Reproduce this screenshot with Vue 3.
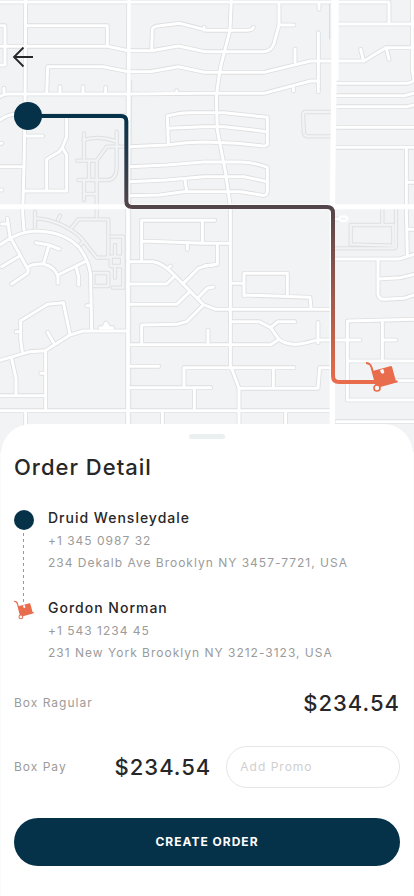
<script setup>
import { ref } from 'vue'

const promo = ref('')

const stops = [
  { kind: 'origin', name: 'Druid Wensleydale', phone: '+1 345 0987 32', address: '234 Dekalb Ave Brooklyn NY 3457-7721, USA' },
  { kind: 'target', name: 'Gordon Norman', phone: '+1 543 1234 45', address: '231 New York Brooklyn NY 3212-3123, USA' },
]
</script>

<template>
  <main class="page">
    <section class="map" aria-label="Delivery route">
      <svg class="map-canvas" viewBox="0 0 1242 1356" preserveAspectRatio="xMidYMin slice" aria-hidden="true">
        <defs>
          <linearGradient id="route-fade" gradientUnits="userSpaceOnUse" x1="0" y1="348" x2="0" y2="1146">
            <stop offset="0" stop-color="#053149" />
            <stop offset="1" stop-color="#e96c4c" />
          </linearGradient>
          <g id="lanes" fill="none" stroke-linecap="round" stroke-linejoin="round">
            <path d="M252 400V475M250 420Q300 405 350 425M350 395V500Q350 540 320 540H235M232 482H290L320 440H380M267 485V540M290 485V650M252 540V600M252 582H290" />
            <path d="M992 336H917Q909 336 909 346L912 400Q914 409 924 409H992" />
            <g transform="translate(0 615)">
              <path d="M105 20V70M110 40Q180 45 240 95L290 158H325V43H235L215 68M180 32L174 45M235 125L250 110M334 95H370V248H338M338 155H366V183H332V155ZM345 120V155M345 183V218M280 204H325V243H280Z" />
            </g>
            <g transform="translate(612 615)">
              <path d="M395 130H568Q576 130 576 120V12M440 60H568V122L440 118ZM535 12V60" />
            </g>
          </g>
          <g id="streets" fill="none" stroke-linecap="round" stroke-linejoin="round">
            <path d="M0 6H1167V72M77 0L75 340L72 500L68 640L72 690M80 77H322V137M0 139H322L385 152H455L535 138L615 155H792Q815 153 822 130L837 75V8M455 150L457 88Q460 78 480 77L540 70L622 91H742Q760 90 760 82" />
            <path d="M0 77H15V195H0M140 280L143 200H310L385 215H450L535 200L612 217H792L932 183H1092L1157 143H1242M0 290Q10 282 25 282H385L612 280H792L932 243H955M180 260V280M249 260V280M317 262V280M12 265V280M530 272V280" />
            <path d="M200 350V410L187 443L200 465V573H75M187 443L178 455L140 478V573M80 408H128M0 500H72M0 360Q20 345 45 343M75 347H380M0 570H6M0 430H6" />
            <path d="M505 430L502 348Q540 338 570 338H672L802 352V433Q797 440 782 437L712 430L612 426L560 428L500 435L390 440M505 385L612 380H672L802 395M390 500L500 495L612 486H722Q762 487 802 502V575Q800 590 782 585L722 575H622L550 575L480 585L390 587M390 545L500 540L612 530H732L802 545M555 540L560 573" />
            <g transform="translate(612 0)">
              <path d="M82 0L78 90L50 200Q38 270 37 300L40 390L65 520L79 620V1095L105 1165V1290M343 98V275M273 147V187M345 10V28M225 75H270M268 265V272M0 82V91" />
              <path d="M400 72H630M625 0V210L630 240M400 250H608Q625 248 630 240M400 287H600L630 280M400 320H610L630 315M400 382H630M395 442H630M607 445V610M610 547H630M470 148L478 180M547 145L555 178" />
            </g>
            <g transform="translate(0 615)">
              <path d="M0 120Q50 80 110 78Q190 80 235 125Q275 175 272 230L275 375M22 40L30 95L85 195L82 205L35 237M5 57H22M5 185L55 155M85 185Q100 175 130 177Q165 185 174 215V235M130 177L147 122M108 113L147 120L178 132M174 210L255 170M228 185L236 215V240" />
              <path d="M0 466L90 440L135 437L210 390L250 378H383M210 388L190 293L143 298L62 347V405L67 440M160 412L143 382M48 380H60M35 460L48 520V570M0 572H137M137 437V612M122 505H134M260 302H272M300 368H338M312 366L318 354L326 366M77 620V670M487 620V660M0 617H995" />
              <path d="M425 165V46H644M607 50V110M427 108L612 115H687M562 118V133M385 170H460Q490 175 525 212L610 299L647 313H995M390 237H500L525 212M506 188L512 183M390 298H530L567 262M550 235L595 190L620 182L642 180M597 275L622 250L640 246M610 300L560 350L530 358L425 360V415" />
              <path d="M390 419H812L837 403L812 368L777 350H697M812 368L834 350H884M837 403Q867 425 912 415L952 405H1080M954 352V413M624 375V417M390 484H476M390 548H632M552 545V488H882M820 488V548M718 550H954L959 488H992M583 550V612" />
            </g>
            <g transform="translate(612 615)">
              <path d="M40 118V178L0 183M80 235H120M120 272V205H250V272M120 270L318 277L321 310M245 620V660" />
              <path d="M395 162H585L630 148M607 12L610 150M612 73H630M522 165V268Q525 283 540 283L600 280L630 270M522 222L590 218L630 208M430 585V348L630 343M535 350V465M540 405H576M432 468H630M430 585H630M560 527H630M398 650H630M395 42H412" />
            </g>
          </g>
          <g id="avenues" fill="none">
            <path stroke-width="10" d="M387 0L384 640V1290" />
            <path stroke-width="15" d="M0 620H1242" />
            <path stroke-width="22" d="M1005 0V240" />
            <path stroke-width="16" d="M1002 230L997 620V1300" />
          </g>
          <symbol id="cart" viewBox="0 0 96 92">
            <path d="M2 4L10 7Q15 10 17 18L31 70" fill="none" stroke="#e96c4c" stroke-width="6" stroke-linecap="round" />
            <path d="M20 28L75 13Q77 13 78 15L89 56L95 57L95 62L43 76L39 72L31 74Z" fill="#e96c4c" />
            <path d="M42 25L52 22L55 33L50 36L45 34Z" fill="#f7f8f9" />
            <circle cx="33" cy="79" r="9" fill="#f7f8f9" stroke="#e96c4c" stroke-width="5" />
          </symbol>
        </defs>

        <use href="#lanes" stroke="#dedfe1" stroke-width="13" />
        <use href="#lanes" stroke="#f1f3f5" stroke-width="7" />
        <use href="#streets" stroke="#dcdee0" stroke-width="14" />
        <path d="M380 0L377 640V1290M395 240L392 640V1290" fill="none" stroke="#e0e2e4" stroke-width="3" />
        <use href="#streets" stroke="#ffffff" stroke-width="9" />
        <use href="#avenues" stroke="#ffffff" />
        <path d="M989 12V118" stroke="#cfdcec" stroke-width="3" />
        <ellipse cx="1030" cy="656" rx="12" ry="7" fill="#f1f3f5" stroke="#ffffff" stroke-width="7" />

        <path
          d="M84 348H363Q379 348 379 364V603Q379 621 397 621H981Q999 621 999 639V1128Q999 1146 1017 1146H1130"
          fill="none"
          stroke="url(#route-fade)"
          stroke-width="12"
        />
        <circle cx="84" cy="348" r="42" fill="#053149" />
        <use href="#cart" x="1098" y="1085" width="96" height="92" />
      </svg>

      <button class="back" type="button" aria-label="Back">
        <svg viewBox="0 0 24 24" aria-hidden="true">
          <path d="M22 12H3M12.500 2.500L3 12L12.500 21.500" fill="none" stroke="#272727" stroke-width="1.800" />
        </svg>
      </button>
    </section>

    <section class="sheet">
      <div class="handle"></div>
      <h1 class="title">Order Detail</h1>

      <ol class="stops">
        <li v-for="stop in stops" :key="stop.name" class="stop">
          <div class="marker">
            <span v-if="stop.kind === 'origin'" class="dot"></span>
            <span v-if="stop.kind === 'origin'" class="trail"></span>
            <svg v-else class="cart" viewBox="0 0 96 92" aria-hidden="true"><use href="#cart" /></svg>
          </div>
          <div class="info">
            <h2 class="name">{{ stop.name }}</h2>
            <p class="detail">{{ stop.phone }}</p>
            <p class="detail">{{ stop.address }}</p>
          </div>
        </li>
      </ol>

      <div class="row">
        <span class="detail">Box Ragular</span>
        <span class="price">$234.54</span>
      </div>

      <form class="checkout" @submit.prevent>
        <div class="pay">
          <label class="detail" for="promo">Box Pay</label>
          <span class="price">$234.54</span>
          <input id="promo" v-model="promo" class="promo" type="text" placeholder="Add Promo" aria-label="Add Promo" />
        </div>
        <button class="submit" type="submit">CREATE ORDER</button>
      </form>
    </section>
  </main>
</template>

<style>
body {
  margin: 0;
  background: #fafbfb;
}
</style>

<style scoped>
.page {
  display: flex;
  flex-direction: column;
  min-height: 100vh;
  color: #272727;
  font-family: Inter, "Liberation Sans", sans-serif;
  letter-spacing: 1px;
}

.map {
  position: relative;
  height: 452px;
  overflow: hidden;
  background: #f1f3f5;
}

.map-canvas {
  display: block;
  width: 100%;
  height: 100%;
}

.back {
  position: absolute;
  top: 45px;
  left: 11px;
  width: 24px;
  height: 24px;
  padding: 0;
  border: 0;
  background: none;
  cursor: pointer;
}

.back svg {
  display: block;
}

.sheet {
  position: relative;
  flex: 1;
  box-sizing: border-box;
  margin: -28px 1px 0;
  padding: 10px 13px 30px;
  border-radius: 30px 30px 0 0;
  background: #fff;
}

.handle {
  width: 36px;
  height: 5px;
  margin: 0 auto 12px;
  border-radius: 3px;
  background: #eaf0f0;
}

.title {
  margin: 0 0 24px;
  font-size: 22px;
  font-weight: 500;
  line-height: 32px;
}

.stops {
  display: flex;
  flex-direction: column;
  margin: 0;
  padding: 0;
  list-style: none;
}

.stop {
  display: flex;
  gap: 14px;
}

.stop:not(:last-child) .info {
  padding-bottom: 23px;
}

.marker {
  display: flex;
  flex-direction: column;
  gap: 3px;
  width: 20px;
  padding-top: 3px;
}

.dot {
  width: 20px;
  height: 20px;
  border-radius: 50%;
  background: #053149;
}

.trail {
  flex: 1;
  width: 1px;
  margin: 0 0 -6px 9px;
  background: repeating-linear-gradient(#999 0 3px, transparent 3px 6px);
}

.cart {
  width: 20px;
  height: 20px;
}

.name {
  margin: 0 0 1px;
  font-size: 14px;
  font-weight: 500;
  line-height: 22px;
}

.detail {
  margin: 0;
  color: #9b9b9b;
  font-size: 12px;
  line-height: 22px;
}

.row,
.pay {
  display: flex;
  align-items: center;
  justify-content: space-between;
}

.row {
  margin-top: 23px;
}

.price {
  font-size: 22px;
  font-weight: 500;
  line-height: 32px;
}

.pay {
  margin-top: 27px;
}

.pay .price {
  margin-left: auto;
}

.promo {
  box-sizing: border-box;
  width: 45%;
  height: 42px;
  margin-left: 15px;
  padding: 0 13px 2px;
  border: 1px solid #e6e6e6;
  border-radius: 21px;
  background: #fff;
  color: #272727;
  font: inherit;
  font-size: 12px;
  letter-spacing: 1px;
}

.promo::placeholder {
  color: #cfcfcf;
  opacity: 1;
}

.submit {
  width: 100%;
  height: 48px;
  margin-top: 30px;
  padding: 0 0 2px;
  border: 0;
  border-radius: 24px;
  background: #053149;
  color: #fff;
  font-family: inherit;
  font-size: 12px;
  font-weight: 700;
  letter-spacing: 1px;
  cursor: pointer;
}
</style>
